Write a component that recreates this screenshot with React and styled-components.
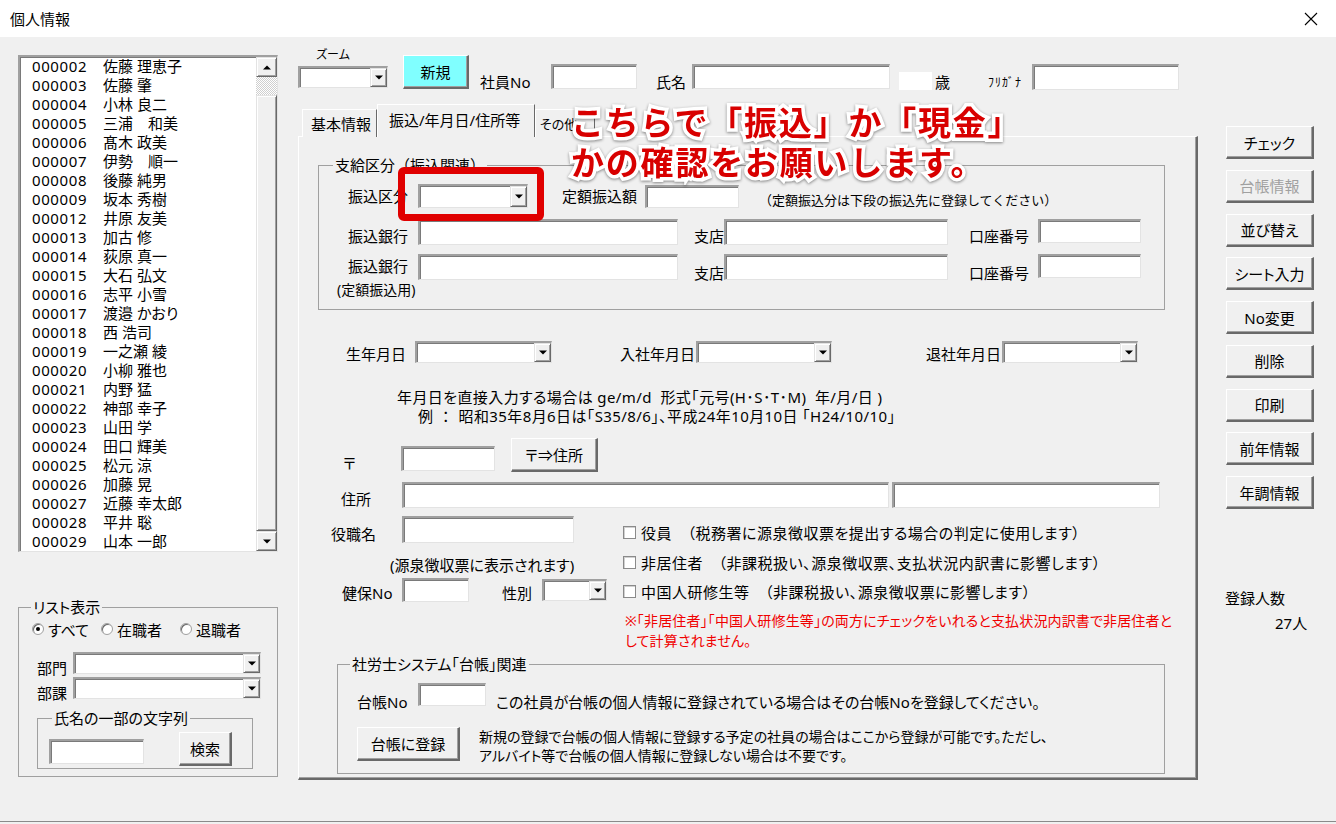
import React from "react";
import styled, { createGlobalStyle, css } from "styled-components";

const GlobalStyle = createGlobalStyle`
  html, body { margin: 0; padding: 0; background: #f0f0f0; }
  body {
    font-family: "Noto Sans", "Noto Sans CJK JP", sans-serif;
    font-feature-settings: "palt";
    color: #000;
  }
  * { box-sizing: border-box; }
`;

const sunken = css`
  border-style: solid;
  border-width: 2px 1px 1px 2px;
  border-color: #a0a0a0 #e3e3e3 #e3e3e3 #a0a0a0;
  box-shadow: inset 1px 1px 0 #7a7a7a;
  background: #fff;
`;

const raised = css`
  border-style: solid;
  border-width: 1px;
  border-color: #e3e3e3 #696969 #696969 #e3e3e3;
  box-shadow: inset 1px 1px 0 #fff, inset -1px -1px 0 #a0a0a0;
  background: #f0f0f0;
`;

const Window = styled.div`
  position: relative;
  width: 1336px;
  height: 822px;
  background: #f0f0f0;
  overflow: hidden;
  border-bottom: 1px solid #8a8a8a;
`;

const TitleBar = styled.div`
  height: 37px;
  background: #fff;
  display: flex;
  align-items: center;
  justify-content: space-between;
  padding: 0 18px 0 10px;
  font-size: 15px;
`;

const Body = styled.div`
  display: flex;
  padding: 10px 0 0 18px;
`;

const LeftColumn = styled.div`
  width: 260px;
  flex: none;
  padding-top: 8px;
`;

const ListBox = styled.div`
  ${sunken};
  height: 497px;
  display: flex;
`;

const ListItems = styled.div`
  flex: 1;
  overflow: hidden;
`;

const ListItem = styled.div`
  display: flex;
  height: 19px;
  line-height: 19px;
  font-size: 15px;
  padding-left: 12px;
  white-space: nowrap;
`;

const ItemId = styled.span`
  width: 71px;
  flex: none;
  letter-spacing: 0.6px;
`;

const ScrollBar = styled.div`
  width: 21px;
  display: flex;
  flex-direction: column;
`;

const ScrollButton = styled.div`
  ${raised};
  height: 20px;
  flex: none;
  display: flex;
  align-items: center;
  justify-content: center;
`;

const ScrollTrack = styled.div`
  flex: 1;
  display: flex;
  flex-direction: column;
  background-color: #fff;
  background-image: repeating-conic-gradient(#cfcfcf 0 25%, #fff 0 50%);
  background-size: 2px 2px;
`;

const ScrollThumb = styled.div`
  ${raised};
  flex: 1;
  margin-top: 18px;
`;

const Frame = styled.fieldset`
  margin: ${(p) => p.$mt || 0}px 0 0 ${(p) => p.$ml || 0}px;
  padding: 0;
  width: ${(p) => p.$w}px;
  height: ${(p) => p.$h}px;
  border: 1px solid #a0a0a0;
  min-width: 0;
  flex: none;
`;

const Legend = styled.legend`
  margin-left: ${(p) => p.$ml}px;
  padding: 0 2px;
  font-size: 15px;
  line-height: 16px;
  font-feature-settings: ${(p) => (p.$full ? "normal" : "'palt'")};
`;

const RadioRow = styled.div`
  display: flex;
  align-items: center;
  height: 18px;
  margin: 5px 0 0 13px;
  font-size: 15px;
`;

const RadioOption = styled.label`
  display: flex;
  align-items: center;
  gap: 4px;
  margin-right: ${(p) => p.$mr}px;
  white-space: nowrap;
`;

const RadioDot = styled.span`
  width: 12px;
  height: 12px;
  border-radius: 50%;
  border: 1px solid #a0a0a0;
  background: #fff;
  box-shadow: inset 1px 1px 0 #696969;
  display: flex;
  align-items: center;
  justify-content: center;
  &::after {
    content: "";
    width: 4px;
    height: 4px;
    border-radius: 50%;
    background: ${(p) => (p.$checked ? "#000" : "transparent")};
  }
`;

const Row = styled.div`
  display: flex;
  align-items: ${(p) => p.$align || "flex-end"};
  height: ${(p) => p.$h}px;
  margin-top: ${(p) => p.$mt || 0}px;
  padding-left: ${(p) => p.$pl || 0}px;
`;

const FieldLabel = styled.span`
  flex: none;
  width: ${(p) => (p.$w ? `${p.$w}px` : "auto")};
  margin-left: ${(p) => p.$ml || 0}px;
  margin-top: ${(p) => p.$mt || 0}px;
  margin-bottom: ${(p) => p.$mb || 0}px;
  font-size: ${(p) => p.$size || 15}px;
  line-height: 18px;
  white-space: nowrap;
  letter-spacing: ${(p) => p.$ls || 0}px;
  align-self: ${(p) => p.$self || "auto"};
  font-feature-settings: ${(p) => (p.$full ? "normal" : "'palt'")};
`;

const TextBox = styled.div`
  ${sunken};
  flex: none;
  width: ${(p) => p.$w}px;
  height: ${(p) => p.$h || 24}px;
  margin-left: ${(p) => p.$ml || 0}px;
  margin-top: ${(p) => p.$mt || 0}px;
  margin-bottom: ${(p) => p.$mb || 0}px;
`;

const ComboBox = styled.div`
  ${sunken};
  flex: none;
  display: flex;
  justify-content: flex-end;
  width: ${(p) => p.$w}px;
  height: ${(p) => p.$h || 22}px;
  margin-left: ${(p) => p.$ml || 0}px;
  margin-top: ${(p) => p.$mt || 0}px;
  margin-bottom: ${(p) => p.$mb || 0}px;
`;

const DropButton = styled.div`
  ${raised};
  width: 17px;
  height: 100%;
  display: flex;
  align-items: center;
  justify-content: center;
`;

const Arrow = ({ up }) => (
  <svg width="8" height="5" viewBox="0 0 8 5">
    <polygon points={up ? "0,4.5 8,4.5 4,0.5" : "0,0.5 8,0.5 4,4.5"} fill="#000" />
  </svg>
);

const Combo = (props) => (
  <ComboBox {...props}>
    <DropButton>
      <Arrow />
    </DropButton>
  </ComboBox>
);

const CmdButton = styled.div`
  border-style: solid;
  border-width: 1px 2px 2px 1px;
  border-color: #fff #696969 #696969 #fff;
  box-shadow: inset -1px -1px 0 #a0a0a0;
  background: ${(p) => p.$bg || "#f0f0f0"};
  flex: none;
  width: ${(p) => p.$w}px;
  height: ${(p) => p.$h || 33}px;
  margin-left: ${(p) => p.$ml || 0}px;
  margin-top: ${(p) => p.$mt || 0}px;
  display: flex;
  align-items: center;
  justify-content: center;
  font-size: ${(p) => p.$size || 15}px;
  color: ${(p) => (p.$disabled ? "#a0a0a0" : "#000")};
  white-space: nowrap;
`;

const SearchRow = styled.div`
  display: flex;
  align-items: flex-start;
  margin: 3px 0 0 11px;
`;

const MainColumn = styled.div`
  width: 900px;
  flex: none;
  margin-left: 20px;
`;

const TopBar = styled.div`
  display: flex;
  align-items: flex-start;
  height: 43px;
`;

const ZoomGroup = styled.div`
  display: flex;
  flex-direction: column;
  width: 90px;
  flex: none;
`;

const SmallLabel = styled.span`
  font-size: 12px;
  line-height: 16px;
  padding-left: 18px;
`;

const AgeBox = styled.div`
  background: #fff;
  width: 33px;
  height: 18px;
  flex: none;
  margin-left: ${(p) => p.$ml}px;
  margin-top: ${(p) => p.$mt}px;
`;

const TabStrip = styled.div`
  display: flex;
  align-items: flex-end;
  height: 33px;
  margin-top: 14px;
  margin-bottom: -1px;
  padding-left: 4px;
  position: relative;
  z-index: 1;
`;

const Tab = styled.div`
  flex: none;
  width: ${(p) => p.$w}px;
  height: ${(p) => (p.$active ? 33 : 28)}px;
  margin-left: ${(p) => p.$ml || 0}px;
  border-style: solid;
  border-width: 1px 1px 0 1px;
  border-color: #fff #696969 transparent #fff;
  background: #f0f0f0;
  display: flex;
  align-items: center;
  padding-left: ${(p) => p.$pl}px;
  padding-bottom: ${(p) => (p.$active ? 4 : 0)}px;
  font-size: ${(p) => p.$size || 15}px;
  white-space: nowrap;
  overflow: hidden;
`;

const Panel = styled.div`
  width: 900px;
  height: 644px;
  border-style: solid;
  border-width: 1px 2px 2px 1px;
  border-color: #fff #696969 #696969 #fff;
  box-shadow: inset -1px -1px 0 #a0a0a0;
  padding: 20px 0 0 19px;
`;

const FrameNote = styled.div`
  font-size: 14px;
  line-height: 18px;
  margin-top: 1px;
  padding-left: 18px;
`;

const Instructions = styled.div`
  margin-top: 25px;
  font-size: 15px;
  line-height: 19px;
  letter-spacing: 0.4px;
  white-space: nowrap;
`;

const InstructionLine = styled.div`
  padding-left: ${(p) => p.$pl}px;
`;

const LowerSection = styled.div`
  display: flex;
  margin-top: 8px;
`;

const LowerLeft = styled.div`
  width: 305px;
  flex: none;
`;

const LowerRight = styled.div`
  display: flex;
  flex-direction: column;
  padding-top: 7px;
`;

const SourceNote = styled.div`
  margin-top: 13px;
  padding-left: 72px;
  font-size: 15px;
  line-height: 18px;
  white-space: nowrap;
`;

const CheckRow = styled.label`
  display: flex;
  align-items: center;
  gap: 5px;
  height: 18px;
  margin-top: ${(p) => p.$mt || 0}px;
  font-size: 15px;
  letter-spacing: 0.5px;
  white-space: nowrap;
`;

const CheckBox = styled.span`
  width: 13px;
  height: 13px;
  flex: none;
  background: #fff;
  border: 1px solid #8a8a8a;
  box-shadow: inset 1px 1px 0 #d0d0d0;
`;

const WarnNote = styled.div`
  margin-top: 11px;
  padding-left: 2px;
  font-size: 14px;
  line-height: 20px;
  letter-spacing: 0.15px;
  color: #f00000;
  white-space: nowrap;
`;

const RegisterText = styled.div`
  margin-left: 19px;
  font-size: 14px;
  line-height: 19px;
  white-space: nowrap;
`;

const RightColumn = styled.div`
  width: 88px;
  flex: none;
  margin-left: 28px;
  padding-top: 79px;
  display: flex;
  flex-direction: column;
`;

const SideButtons = styled.div`
  display: flex;
  flex-direction: column;
  gap: 10.75px;
`;

const StatLabel = styled.div`
  font-size: 15px;
  line-height: 18px;
  margin-top: ${(p) => p.$mt}px;
  padding-left: ${(p) => p.$pl || 0}px;
  margin-left: -1px;
  white-space: nowrap;
`;

const Callout = styled.div`
  position: absolute;
  left: 571px;
  top: 101px;
  font-family: "Noto Sans CJK JP", sans-serif;
  font-size: 33px;
  line-height: 40px;
  font-weight: 700;
  letter-spacing: 1.8px;
  font-feature-settings: normal;
  color: #d80000;
  -webkit-text-stroke: 7px #fff;
  paint-order: stroke fill;
  filter: drop-shadow(0 1px 1.5px rgba(0, 0, 0, 0.45));
  white-space: nowrap;
  z-index: 5;
`;

const Highlight = styled.div`
  position: absolute;
  left: 398px;
  top: 167px;
  width: 146px;
  height: 54px;
  border: 7px solid #e00000;
  border-radius: 6px;
  z-index: 4;
`;

const employees = [
  ["000002", "佐藤 理恵子"],
  ["000003", "佐藤 肇"],
  ["000004", "小林 良二"],
  ["000005", "三浦　和美"],
  ["000006", "髙木 政美"],
  ["000007", "伊勢　順一"],
  ["000008", "後藤 純男"],
  ["000009", "坂本 秀樹"],
  ["000012", "井原 友美"],
  ["000013", "加古 修"],
  ["000014", "荻原 真一"],
  ["000015", "大石 弘文"],
  ["000016", "志平 小雪"],
  ["000017", "渡邉 かおり"],
  ["000018", "西 浩司"],
  ["000019", "一之瀬 綾"],
  ["000020", "小柳 雅也"],
  ["000021", "内野 猛"],
  ["000022", "神部 幸子"],
  ["000023", "山田 学"],
  ["000024", "田口 輝美"],
  ["000025", "松元 涼"],
  ["000026", "加藤 晃"],
  ["000027", "近藤 幸太郎"],
  ["000028", "平井 聡"],
  ["000029", "山本 一郎"],
];

const sideButtons = [
  "チェック",
  "台帳情報",
  "並び替え",
  "シート入力",
  "No変更",
  "削除",
  "印刷",
  "前年情報",
  "年調情報",
];

export default function App() {
  return (
    <Window>
      <GlobalStyle />
      <TitleBar>
        <span>個人情報</span>
        <svg width="14" height="14" viewBox="0 0 14 14">
          <path d="M1 1L13 13M13 1L1 13" stroke="#000" strokeWidth="1.1" />
        </svg>
      </TitleBar>
      <Body>
        <LeftColumn>
          <ListBox>
            <ListItems>
              {employees.map(([id, name]) => (
                <ListItem key={id}>
                  <ItemId>{id}</ItemId>
                  <span>{name}</span>
                </ListItem>
              ))}
            </ListItems>
            <ScrollBar>
              <ScrollButton>
                <Arrow up />
              </ScrollButton>
              <ScrollTrack>
                <ScrollThumb />
              </ScrollTrack>
              <ScrollButton>
                <Arrow />
              </ScrollButton>
            </ScrollBar>
          </ListBox>

          <Frame $w={260} $h={178} $mt={47}>
            <Legend $ml={12}>リスト表示</Legend>
            <RadioRow>
              <RadioOption $mr={12}>
                <RadioDot $checked />
                すべて
              </RadioOption>
              <RadioOption $mr={18}>
                <RadioDot />
                在職者
              </RadioOption>
              <RadioOption $mr={0}>
                <RadioDot />
                退職者
              </RadioOption>
            </RadioRow>
            <Row $h={22} $mt={14}>
              <FieldLabel $ml={18} $w={36} $mb={-3}>部門</FieldLabel>
              <Combo $w={188} $h={22} />
            </Row>
            <Row $h={22} $mt={3}>
              <FieldLabel $ml={18} $w={36} $mb={-3}>部課</FieldLabel>
              <Combo $w={188} $h={22} />
            </Row>
            <Frame $w={216} $h={59} $mt={11} $ml={18}>
              <Legend $ml={14}>氏名の一部の文字列</Legend>
              <SearchRow>
                <TextBox $w={95} $h={25} $mt={10} />
                <CmdButton $w={53} $h={34} $ml={35} $mt={3}>
                  検索
                </CmdButton>
              </SearchRow>
            </Frame>
          </Frame>
        </LeftColumn>

        <MainColumn>
          <TopBar>
            <ZoomGroup>
              <SmallLabel>ズーム</SmallLabel>
              <Combo $w={90} $h={22} $mt={3} />
            </ZoomGroup>
            <CmdButton $w={66} $h={34} $ml={15} $mt={8} $bg="#80ffff">
              新規
            </CmdButton>
            <FieldLabel $ml={11} $w={71} $mt={26}>社員No</FieldLabel>
            <TextBox $w={86} $h={25} $mt={17} />
            <FieldLabel $ml={19} $w={36} $mt={26}>氏名</FieldLabel>
            <TextBox $w={198} $h={25} $mt={17} />
            <AgeBox $ml={9} $mt={25} />
            <FieldLabel $ml={3} $w={20} $mt={26}>歳</FieldLabel>
            <FieldLabel $ml={33} $w={44} $size={12} $ls={1} $mt={27}>
              ﾌﾘｶﾞﾅ
            </FieldLabel>
            <TextBox $w={147} $h={26} $mt={17} />
          </TopBar>

          <TabStrip>
            <Tab $w={75} $pl={8}>基本情報</Tab>
            <Tab $w={158} $pl={11} $active>振込/年月日/住所等</Tab>
            <Tab $w={60} $pl={4} $size={13}>その他</Tab>
          </TabStrip>

          <Panel>
            <Frame $w={847} $h={153}>
              <Legend $ml={14} $full>支給区分（振込関連）</Legend>
              <Row $h={24} $mt={11} $pl={29} $align="center">
                <FieldLabel $w={70}>振込区分</FieldLabel>
                <Combo $w={110} $h={24} />
                <FieldLabel $ml={34} $w={83}>定額振込額</FieldLabel>
                <TextBox $w={94} $h={23} />
                <FieldLabel $ml={20} $size={13} $self="flex-end" $mb={-1} $full>
                  （定額振込分は下段の振込先に登録してください）
                </FieldLabel>
              </Row>
              <Row $h={26} $mt={11} $pl={29}>
                <FieldLabel $w={70}>振込銀行</FieldLabel>
                <TextBox $w={260} $h={26} />
                <FieldLabel $ml={16} $w={30}>支店</FieldLabel>
                <TextBox $w={224} $h={26} />
                <FieldLabel $ml={21} $w={69}>口座番号</FieldLabel>
                <TextBox $w={103} $h={24} $mb={2} />
              </Row>
              <Row $h={26} $mt={9} $pl={29}>
                <FieldLabel $w={70} $mb={5}>振込銀行</FieldLabel>
                <TextBox $w={260} $h={26} />
                <FieldLabel $ml={16} $w={30} $mb={-2}>支店</FieldLabel>
                <TextBox $w={224} $h={26} />
                <FieldLabel $ml={21} $w={69} $mb={-2}>口座番号</FieldLabel>
                <TextBox $w={103} $h={24} $mb={2} />
              </Row>
              <FrameNote>(定額振込用)</FrameNote>
            </Frame>

            <Row $h={22} $mt={31}>
              <FieldLabel $ml={28} $w={69}>生年月日</FieldLabel>
              <Combo $w={137} $h={22} />
              <FieldLabel $ml={68} $w={76}>入社年月日</FieldLabel>
              <Combo $w={136} $h={22} />
              <FieldLabel $ml={94} $w={76}>退社年月日</FieldLabel>
              <Combo $w={136} $h={22} />
            </Row>

            <Instructions>
              <InstructionLine $pl={79}>
                年月日を直接入力する場合は ge/m/d&nbsp;&nbsp;形式｢元号(H･S･T･M)&nbsp;&nbsp;年/月/日 )
              </InstructionLine>
              <InstructionLine $pl={100}>
                例&nbsp;&nbsp;：&nbsp;&nbsp;昭和35年8月6日は｢S35/8/6｣、平成24年10月10日 ｢H24/10/10｣
              </InstructionLine>
            </Instructions>

            <Row $h={34} $mt={12}>
              <FieldLabel $ml={25} $w={58}>〒</FieldLabel>
              <TextBox $w={94} $h={25} $mb={1} />
              <CmdButton $w={87} $h={34} $ml={16}>〒⇒住所</CmdButton>
            </Row>

            <Row $h={26} $mt={10}>
              <FieldLabel $ml={23} $w={61}>住所</FieldLabel>
              <TextBox $w={487} $h={26} />
              <TextBox $w={268} $h={26} $ml={3} />
            </Row>

            <LowerSection>
              <LowerLeft>
                <Row $h={27}>
                  <FieldLabel $ml={13} $w={71}>役職名</FieldLabel>
                  <TextBox $w={172} $h={27} />
                </Row>
                <SourceNote>(源泉徴収票に表示されます)</SourceNote>
                <Row $h={24} $mt={4}>
                  <FieldLabel $ml={24} $w={60}>健保No</FieldLabel>
                  <TextBox $w={67} $h={24} />
                  <FieldLabel $ml={33} $w={40}>性別</FieldLabel>
                  <Combo $w={65} $h={22} $mb={1} />
                </Row>
              </LowerLeft>
              <LowerRight>
                <CheckRow>
                  <CheckBox />
                  役員　（税務署に源泉徴収票を提出する場合の判定に使用します）
                </CheckRow>
                <CheckRow $mt={12}>
                  <CheckBox />
                  非居住者　（非課税扱い、源泉徴収票、支払状況内訳書に影響します）
                </CheckRow>
                <CheckRow $mt={11}>
                  <CheckBox />
                  中国人研修生等　（非課税扱い、源泉徴収票に影響します）
                </CheckRow>
                <WarnNote>
                  ※｢非居住者｣｢中国人研修生等｣の両方にチェックをいれると支払状況内訳書で非居住者と
                  <br />
                  して計算されません。
                </WarnNote>
              </LowerRight>
            </LowerSection>

            <Frame $w={828} $h={118} $mt={5} $ml={19}>
              <Legend $ml={12}>社労士システム｢台帳｣関連</Legend>
              <Row $h={23} $mt={11}>
                <FieldLabel $ml={19} $w={61} $mb={-5}>台帳No</FieldLabel>
                <TextBox $w={68} $h={23} />
                <FieldLabel $ml={10} $mb={-5}>
                  この社員が台帳の個人情報に登録されている場合はその台帳Noを登録してください。
                </FieldLabel>
              </Row>
              <Row $h={34} $mt={21} $align="flex-start">
                <CmdButton $w={103} $h={34} $ml={19}>台帳に登録</CmdButton>
                <RegisterText>
                  新規の登録で台帳の個人情報に登録する予定の社員の場合はここから登録が可能です。ただし、
                  <br />
                  アルバイト等で台帳の個人情報に登録しない場合は不要です。
                </RegisterText>
              </Row>
            </Frame>
          </Panel>
        </MainColumn>

        <RightColumn>
          <SideButtons>
            {sideButtons.map((label) => (
              <CmdButton key={label} $w={88} $h={33} $disabled={label === "台帳情報"}>
                {label}
              </CmdButton>
            ))}
          </SideButtons>
          <StatLabel $mt={80}>登録人数</StatLabel>
          <StatLabel $mt={7} $pl={50}>27人</StatLabel>
        </RightColumn>
      </Body>

      <Callout>
        こちらで「振込」か「現金」
        <br />
        かの確認をお願いします。
      </Callout>
      <Highlight />
    </Window>
  );
}
